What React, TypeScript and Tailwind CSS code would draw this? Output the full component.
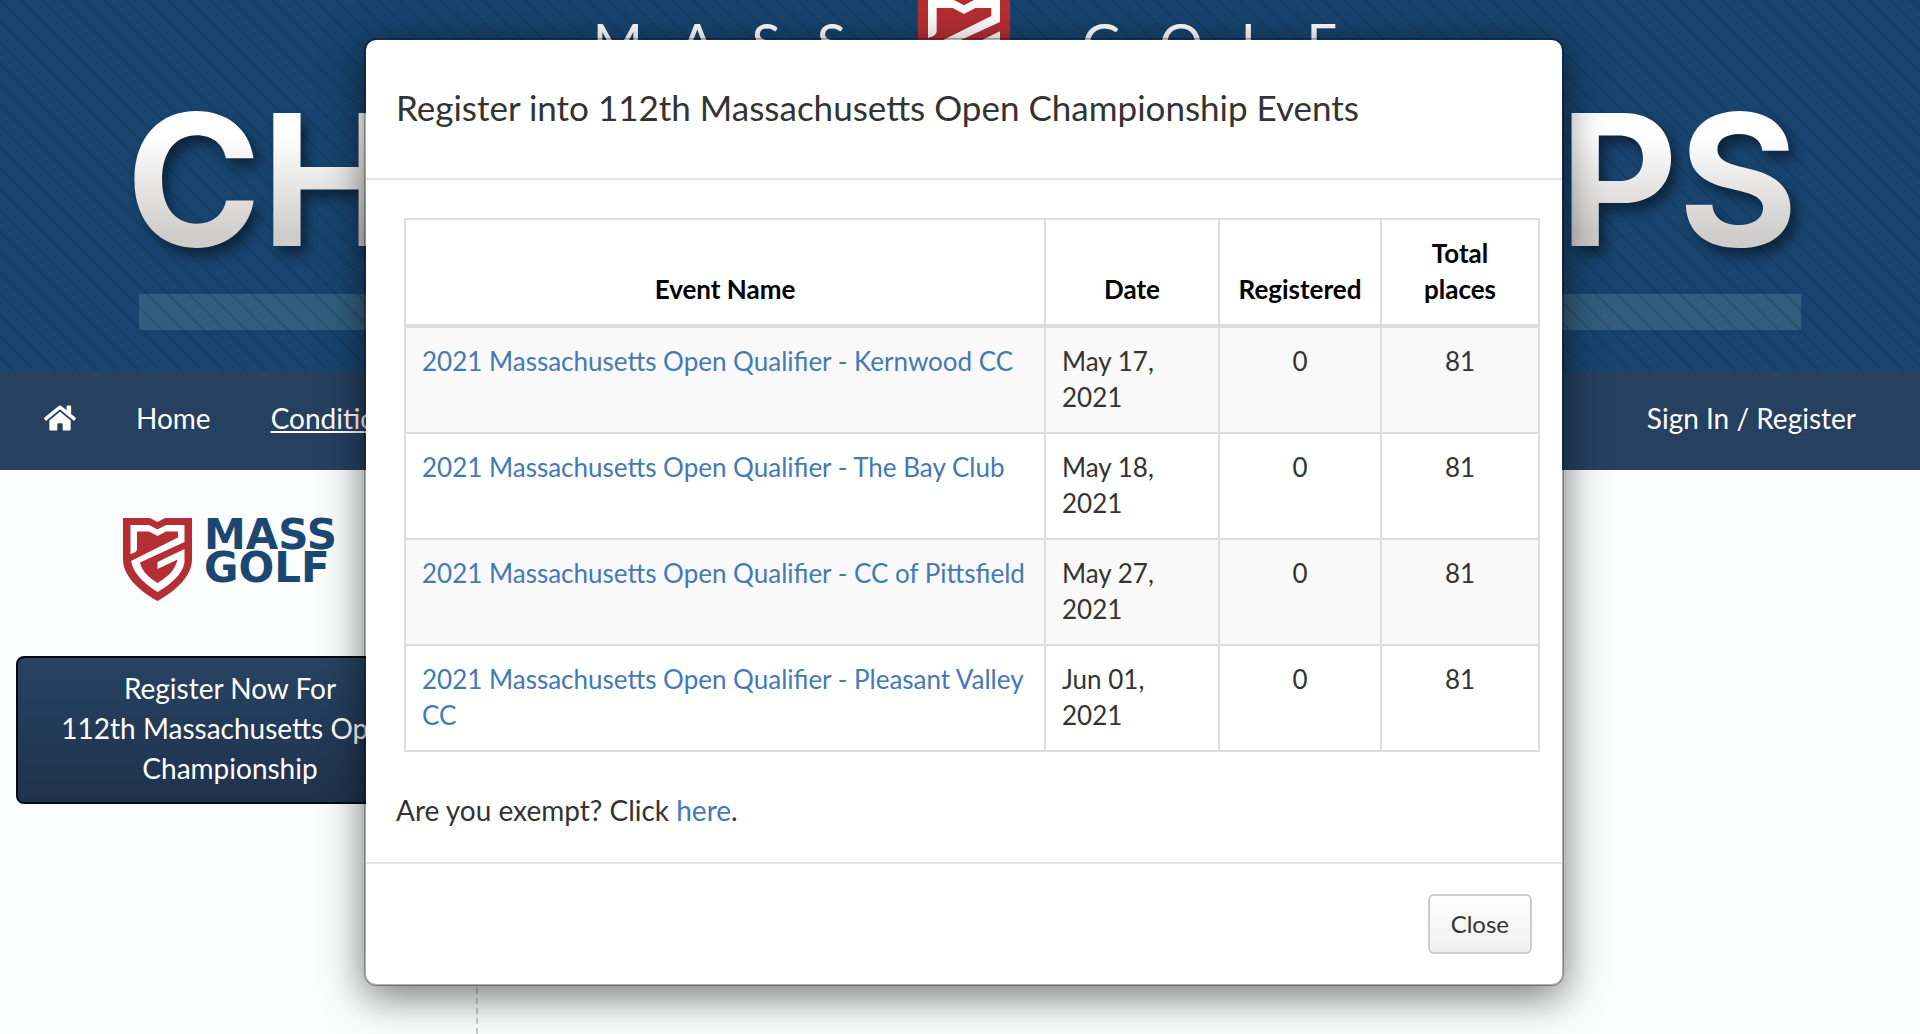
import React, { useState } from 'react';
import { FaHome } from 'react-icons/fa';

type GolfEvent = {
  name: string;
  date: string;
  registered: number;
  places: number;
};

const events: GolfEvent[] = [
  { name: '2021 Massachusetts Open Qualifier - Kernwood CC', date: 'May 17, 2021', registered: 0, places: 81 },
  { name: '2021 Massachusetts Open Qualifier - The Bay Club', date: 'May 18, 2021', registered: 0, places: 81 },
  { name: '2021 Massachusetts Open Qualifier - CC of Pittsfield', date: 'May 27, 2021', registered: 0, places: 81 },
  { name: '2021 Massachusetts Open Qualifier - Pleasant Valley CC', date: 'Jun 01, 2021', registered: 0, places: 81 },
];

// Red crest, shared by the banner and the sidebar logo
function Shield({ className }: { className?: string }) {
  return (
    <svg viewBox="0 0 69 83" className={className} aria-hidden="true">
      <path d="M0 0H27L34.500 4L42 0H69V41C69 58 54 72 34.500 83C15 72 0 58 0 41Z" fill="#b52e34" />
      <path
        d="M7.500 36V7H26L34.500 11.500L43 7H61.500V24L17 44.500C19 53 25 59 34.500 65C46 58 52 52 54.500 41.500L34.500 51V44L61.500 31V44C60 56 48 66 34.500 74C22 66 11 57 8 43L55 19.500V13.500H43L34.500 18L26 13.500H14V31C14 33 12 35 7.500 36Z"
        fill="#fff"
      />
    </svg>
  );
}

// Top banner with the striped background and the big title
function Banner() {
  return (
    <div className="relative h-[370px] overflow-hidden bg-[#18446f]">
      <div className="absolute inset-x-0 top-[294px] mr-[119px] ml-[139px] h-9 bg-[#7fa8b0]/25" />
      <svg className="absolute inset-0 h-full w-full" aria-hidden="true">
        <defs>
          <pattern id="stripes" width="21" height="21" patternUnits="userSpaceOnUse">
            <path d="M-2 -2L23 23M-2 19L2 23M19 -2L23 2" stroke="#0a1c30" strokeOpacity="0.18" strokeWidth="2" />
          </pattern>
        </defs>
        <rect width="100%" height="100%" fill="url(#stripes)" />
      </svg>
      <div className="relative -mt-2.5 flex justify-center gap-[72px] pl-2.5 text-[54px] leading-[106px] text-white">
        <div className="flex gap-9">
          {['M', 'A', 'S', 'S'].map((letter, i) => (
            <span key={i}>{letter}</span>
          ))}
        </div>
        <Shield className="w-[92px] self-start" />
        <div className="flex gap-[38px]">
          {['G', 'O', 'L', 'F'].map((letter, i) => (
            <span key={i}>{letter}</span>
          ))}
        </div>
      </div>
      <div className="absolute inset-x-0 top-[70px] flex justify-between pr-[122px] pl-[126px] font-[Inter] text-[183px] leading-[220px] font-bold drop-shadow-[6px_8px_6px_rgba(0,0,0,0.45)]">
        <span className="bg-linear-to-b from-white from-30% to-[#cfcdcc] to-75% bg-clip-text text-transparent">CHAMP</span>
        <span className="bg-linear-to-b from-white from-30% to-[#cfcdcc] to-75% bg-clip-text text-transparent">SHIPS</span>
      </div>
    </div>
  );
}

function NavBar() {
  return (
    <nav className="flex h-[100px] items-center justify-between bg-[#264060] pr-16 pb-1 pl-11 text-[28px] text-white">
      <div className="flex items-center gap-[60px]">
        <a href="#" aria-label="Start">
          <FaHome className="h-8 w-8" />
        </a>
        <a href="#home">Home</a>
        <a href="#conditions" className="underline">Conditions</a>
      </div>
      <a href="#signin">Sign In / Register</a>
    </nav>
  );
}

function Sidebar() {
  return (
    <aside className="w-[478px] border-r-2 border-dashed border-[#ccc] pt-12 pr-8 pl-4">
      <a href="#massgolf" className="flex justify-center gap-3">
        <Shield className="h-[83px] w-[69px]" />
        <span className="font-['DejaVu_Sans'] text-[42px] leading-[33px] font-bold text-[#1b4873]">
          MASS
          <br />
          GOLF
        </span>
      </a>
      <button className="mt-[55px] w-full rounded-lg border-2 border-[#060b12] bg-linear-to-b from-[#274362] to-[#1f324c] px-8 pt-2.5 pb-3.5 text-[28px] leading-10 text-white">
        Register Now For
        <br />
        112th Massachusetts Open Championship
      </button>
    </aside>
  );
}

function RegisterDialog({ onClose }: { onClose: () => void }) {
  return (
    <div className="absolute inset-x-0 top-0 pt-[38px] pl-2">
      <div
        role="dialog"
        aria-labelledby="dialog-title"
        className="mx-auto max-w-[1200px] rounded-xl border-2 border-black/30 bg-white bg-clip-padding shadow-[0_10px_40px_rgba(0,0,0,0.55)]"
      >
        <div className="border-b-2 border-[#e5e5e5] px-[30px] pt-9 pb-10">
          <h4 id="dialog-title" className="text-[35px] leading-[62px]">
            Register into 112th Massachusetts Open Championship Events
          </h4>
        </div>

        <div className="px-[30px] pt-[38px] pb-8">
          <div className="-mr-2 pl-2">
            <table className="w-full border-collapse text-[26px] leading-9">
              <thead>
                <tr className="align-bottom text-black">
                  <th className="border-2 border-b-4 border-[#ddd] px-4 pt-[15px] pb-[17px]">Event Name</th>
                  <th className="w-[174px] border-2 border-b-4 border-[#ddd] px-4 pt-[15px] pb-[17px]">Date</th>
                  <th className="w-[162px] border-2 border-b-4 border-[#ddd] px-4 pt-[15px] pb-[17px]">Registered</th>
                  <th className="w-[158px] border-2 border-b-4 border-[#ddd] px-4 pt-[15px] pb-[17px]">Total places</th>
                </tr>
              </thead>
              <tbody>
                {events.map((event) => (
                  <tr key={event.name} className="align-top odd:bg-[#f9f9f9]">
                    <td className="border-2 border-[#ddd] px-4 pt-[15px] pb-[17px]">
                      <a href="#event" className="text-[#4379b5]">{event.name}</a>
                    </td>
                    <td className="border-2 border-[#ddd] px-4 pt-[15px] pb-[17px]">{event.date}</td>
                    <td className="border-2 border-[#ddd] px-4 pt-[15px] pb-[17px] text-center">{event.registered}</td>
                    <td className="border-2 border-[#ddd] px-4 pt-[15px] pb-[17px] text-center">{event.places}</td>
                  </tr>
                ))}
              </tbody>
            </table>
          </div>
          <p className="mt-[38px] text-[28px] leading-10">
            Are you exempt? Click <a href="#exempt" className="text-[#4379b5]">here</a>.
          </p>
        </div>

        <div className="flex justify-end border-t-2 border-[#e5e5e5] p-[30px]">
          <button
            onClick={onClose}
            className="rounded-md border-2 border-[#ccc] bg-linear-to-b from-white to-[#f0f0f0] px-[21px] py-2 text-2xl leading-10"
          >
            Close
          </button>
        </div>
      </div>
    </div>
  );
}

export default function App() {
  const [open, setOpen] = useState(true);

  return (
    <div className="relative flex min-h-screen flex-col overflow-hidden bg-[#fbfdfc] font-[Lato,sans-serif] text-[#333]">
      <Banner />
      <NavBar />
      <div className="flex grow">
        <Sidebar />
      </div>
      {open && <RegisterDialog onClose={() => setOpen(false)} />}
    </div>
  );
}
